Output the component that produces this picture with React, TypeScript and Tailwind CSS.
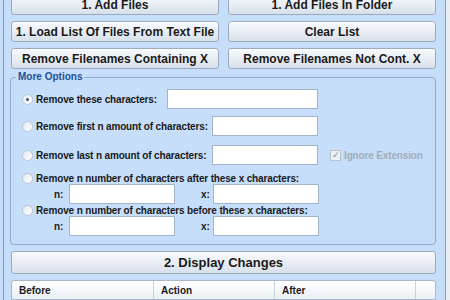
import React from "react";

const font = { fontFamily: '"Liberation Sans", Arial, sans-serif' };

function Button({ label, className = "" }: { label: string; className?: string }) {
  return (
    <div
      className={
        "flex items-center justify-center whitespace-nowrap rounded-[3px] border border-[#9aabbd] bg-gradient-to-b from-[#f7f9fc] via-[#e9eef4] to-[#d6dfe9] text-[12px] font-bold text-[#1a1a1a] shadow-[inset_0_1px_0_#ffffff] " +
        className
      }
    >
      {label}
    </div>
  );
}

function Radio({ checked = false }: { checked?: boolean }) {
  return (
    <div className="flex h-[11px] w-[11px] shrink-0 items-center justify-center rounded-full border border-[#b9c6d4] bg-gradient-to-br from-[#e4e9ef] to-[#ffffff]">
      {checked && <div className="h-[3px] w-[3px] rounded-full bg-[#4a5563]" />}
    </div>
  );
}

function TextInput({ className = "" }: { className?: string }) {
  return <div className={"h-[20px] shrink-0 border border-[#9fb3c9] bg-white " + className} />;
}

function NxRow() {
  return (
    <div className="flex h-[20px] items-center">
      <span className="ml-[32px] w-[15px]">n:</span>
      <TextInput className="w-[106px]" />
      <span className="ml-[26px] w-[12px]">x:</span>
      <TextInput className="w-[106px]" />
    </div>
  );
}

export default function App() {
  return (
    <div className="flex h-[300px] w-[450px] overflow-hidden bg-[#c6defa] text-[#1a1a1a]" style={font}>
      <div className="w-[3px] shrink-0" />
      <div className="flex w-[443px] shrink-0 flex-col border-x border-[#8d9bab] pl-[7px] pr-[9px]">
        <div className="mt-[-6px] grid grid-cols-2 gap-x-[9px] gap-y-[6px]">
          <Button label="1. Add Files" className="h-[21px]" />
          <Button label="1. Add Files In Folder" className="h-[21px]" />
          <Button label="1. Load List Of Files From Text File" className="h-[21px]" />
          <Button label="Clear List" className="h-[21px]" />
          <Button label="Remove Filenames Containing X" className="h-[21px]" />
          <Button label="Remove Filenames Not Cont. X" className="h-[21px]" />
        </div>

        <fieldset className="ml-[-1px] mt-[1px] h-[177px] rounded-[4px] border border-[#8eacd0] pl-[11px]">
          <legend className="ml-[-6px] px-[2px] text-[10px] font-bold leading-[14px] text-[#1f4f9c]">More Options</legend>
          <div className="flex flex-col whitespace-nowrap text-[10px] font-bold tracking-[-0.15px]">
            <div className="mt-[5px] flex h-[20px] items-center">
              <Radio checked />
              <span className="ml-[3px] w-[131px]">Remove these characters:</span>
              <TextInput className="w-[151px]" />
            </div>
            <div className="mt-[7px] flex h-[20px] items-center">
              <Radio />
              <span className="ml-[3px] w-[176px]">Remove first n amount of characters:</span>
              <TextInput className="w-[106px]" />
            </div>
            <div className="mt-[9px] flex h-[20px] items-center">
              <Radio />
              <span className="ml-[3px] w-[176px]">Remove last n amount of characters:</span>
              <TextInput className="w-[106px]" />
              <div className="ml-[12px] flex items-center text-[#a3acb6]">
                <div className="flex h-[11px] w-[11px] items-center justify-center border border-[#b8c2cd] bg-[#eef2f6] text-[9px] leading-none">
                  ✓
                </div>
                <span className="ml-[3px]">Ignore Extension</span>
              </div>
            </div>
            <div className="mt-[7px] flex h-[12px] items-center">
              <Radio />
              <span className="ml-[3px]">Remove n number of characters after these x characters:</span>
            </div>
            <NxRow />
            <div className="flex h-[12px] items-center">
              <Radio />
              <span className="ml-[3px]">Remove n number of characters before these x characters:</span>
            </div>
            <NxRow />
          </div>
        </fieldset>

        <Button label="2. Display Changes" className="mt-[6px] h-[23px] text-[13px]" />

        <div className="mt-[6px] flex h-[20px] rounded-t-[3px] border border-[#a9b8c8] bg-gradient-to-b from-[#ffffff] to-[#eaeff5] text-[10px] font-bold">
          <div className="flex w-[142px] items-center border-r border-[#c8d2dc] pl-[7px]">Before</div>
          <div className="flex w-[121px] items-center border-r border-[#c8d2dc] pl-[7px]">Action</div>
          <div className="flex w-[141px] items-center border-r border-[#c8d2dc] pl-[7px]">After</div>
          <div className="flex-1" />
        </div>
      </div>
      <div className="flex-1 bg-[#e9eef4]" />
    </div>
  );
}
